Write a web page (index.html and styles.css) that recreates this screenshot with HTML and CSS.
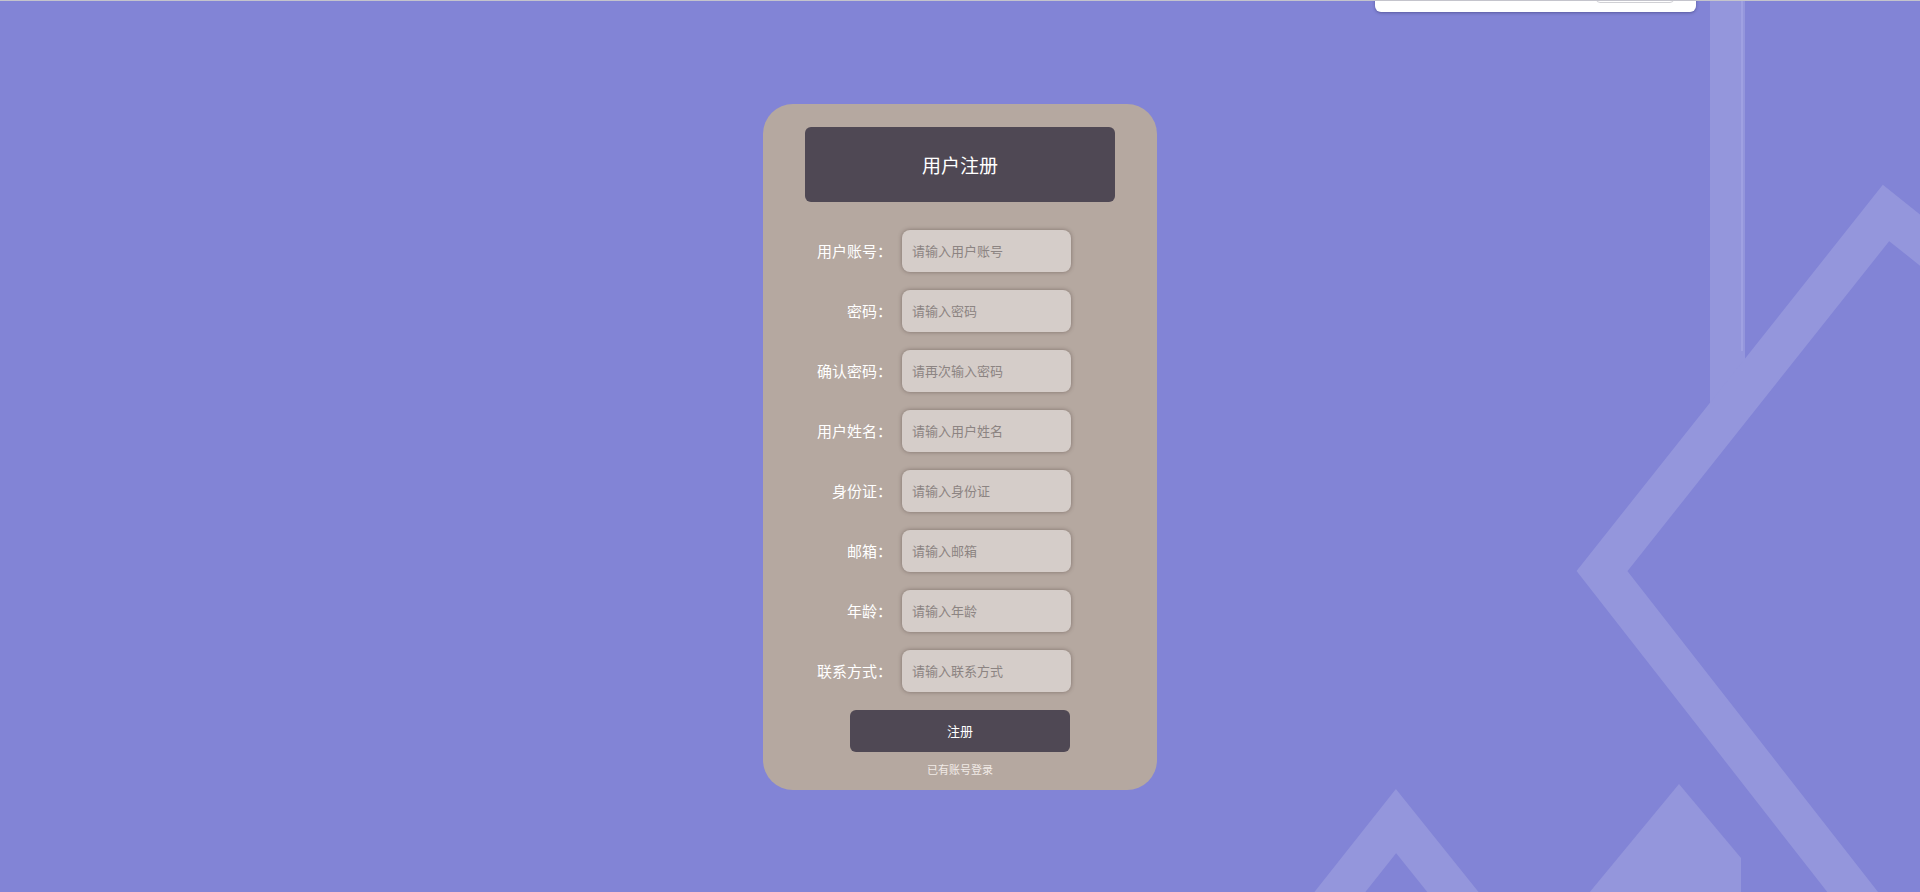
FILE: index.html
```html
<!DOCTYPE html>
<html lang="zh-CN">
<head>
<meta charset="utf-8">
<title>用户注册</title>
<link rel="stylesheet" href="styles.css">
</head>
<body>
<svg class="decor" width="1920" height="892" viewBox="0 0 1920 892" xmlns="http://www.w3.org/2000/svg" aria-hidden="true">
  <rect x="1710" y="0" width="35" height="420" fill="#9496dc"/>
  <rect x="1741" y="0" width="2" height="350" fill="#9fa1e2"/>
  <polyline points="1965,275 1886,212 1602,570 1880,926" fill="none" stroke="#9496dc" stroke-width="40" stroke-linejoin="miter" stroke-miterlimit="10"/>
  <polyline points="1298,944 1396,820 1497,946" fill="none" stroke="#9496dc" stroke-width="40" stroke-linejoin="miter" stroke-miterlimit="10"/>
  <polygon points="1679,783 1741,857 1741,892 1589,892" fill="#9496dc"/>
</svg>

<div class="popup"><span class="popup-btn"></span></div>

<main class="page">
  <section class="card">
    <h1 class="card-title">用户注册</h1>
    <form class="form">
      <div class="row"><label class="label">用户账号：</label><input class="field" type="text" placeholder="请输入用户账号"></div>
      <div class="row"><label class="label">密码：</label><input class="field" type="password" placeholder="请输入密码"></div>
      <div class="row"><label class="label">确认密码：</label><input class="field" type="password" placeholder="请再次输入密码"></div>
      <div class="row"><label class="label">用户姓名：</label><input class="field" type="text" placeholder="请输入用户姓名"></div>
      <div class="row"><label class="label">身份证：</label><input class="field" type="text" placeholder="请输入身份证"></div>
      <div class="row"><label class="label">邮箱：</label><input class="field" type="text" placeholder="请输入邮箱"></div>
      <div class="row"><label class="label">年龄：</label><input class="field" type="text" placeholder="请输入年龄"></div>
      <div class="row"><label class="label">联系方式：</label><input class="field" type="text" placeholder="请输入联系方式"></div>
      <button class="submit" type="button">注册</button>
      <a class="login-link" href="#">已有账号登录</a>
    </form>
  </section>
</main>
</body>
</html>
```

FILE: styles.css
```css
* { box-sizing: border-box; }

html, body {
  margin: 0;
  padding: 0;
  height: 100%;
}

body {
  background: #8284d6;
  border-top: 1px solid #c4c4cc;
  font-family: "Noto Sans CJK SC", "Noto Sans", sans-serif;
  overflow: hidden;
  position: relative;
}

.decor {
  position: absolute;
  left: 0;
  top: 0;
  z-index: 0;
}

.popup {
  position: absolute;
  left: 1375px;
  top: -20px;
  width: 321px;
  height: 31px;
  background: #ffffff;
  border-radius: 6px;
  box-shadow: 0 1px 3px rgba(40, 40, 90, 0.45);
  z-index: 2;
}

.popup-btn {
  position: absolute;
  left: 221px;
  top: 0;
  width: 78px;
  height: 22px;
  border: 1px solid #d0d0d4;
  border-radius: 4px;
}

.page {
  position: relative;
  z-index: 1;
  height: 891px;
  display: flex;
  align-items: center;
  justify-content: center;
}

.card {
  width: 394px;
  padding: 23px 42px 13px;
  background: #b5a8a0;
  border-radius: 30px;
}

.card-title {
  margin: 0;
  height: 75px;
  display: flex;
  align-items: center;
  justify-content: center;
  background: #4f4854;
  border-radius: 6px;
  color: #ffffff;
  font-size: 19px;
  font-weight: 400;
}

.form {
  margin-top: 28px;
  display: flex;
  flex-direction: column;
}

.row {
  display: flex;
  align-items: center;
  height: 42px;
  margin-bottom: 18px;
}

.label {
  width: 87px;
  margin-right: 10px;
  text-align: right;
  color: #ffffff;
  font-size: 15px;
  white-space: nowrap;
}

.field {
  width: 169px;
  height: 42px;
  padding: 0 10px;
  border: none;
  outline: none;
  border-radius: 8px;
  background: #d5cdc9;
  box-shadow: 0 0 4px rgba(60, 45, 40, 0.45);
  font-family: inherit;
  font-size: 13px;
  color: #4a4446;
}

.field::placeholder {
  color: #8c8482;
}

.submit {
  align-self: center;
  width: 220px;
  height: 42px;
  border: none;
  border-radius: 6px;
  background: #4f4854;
  color: #ffffff;
  font-family: inherit;
  font-size: 13px;
}

.login-link {
  align-self: center;
  margin-top: 9px;
  line-height: 16px;
  font-size: 11px;
  color: #f1ebe7;
  text-decoration: none;
}
```
